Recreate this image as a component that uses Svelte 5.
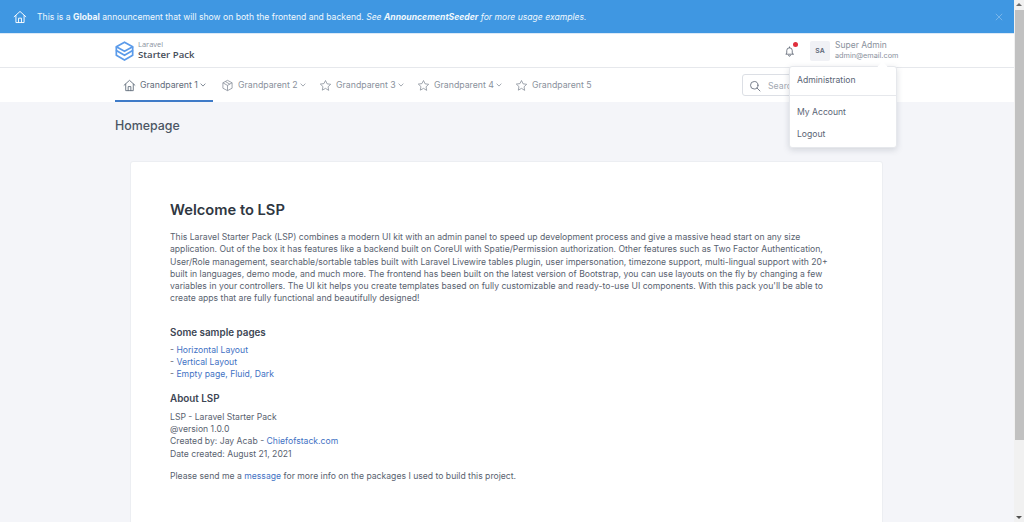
<script>
  const navItems = [
    { label: 'Grandparent 1', icon: 'home', caret: true, active: true },
    { label: 'Grandparent 2', icon: 'cube', caret: true },
    { label: 'Grandparent 3', icon: 'star', caret: true },
    { label: 'Grandparent 4', icon: 'star', caret: true },
    { label: 'Grandparent 5', icon: 'star', caret: false }
  ];
</script>

{#snippet homeIcon(cls)}
  <svg class={cls} viewBox="0 0 24 24" fill="none" stroke="currentColor" stroke-width="1.6" stroke-linecap="round" stroke-linejoin="round">
    <path d="M2 11.500 12 2.500l10 9" />
    <path d="M5 9.500V21.500h14V9.500" />
    <path d="M9.500 21.500v-7.500h5v7.500" />
  </svg>
{/snippet}

<div class="shell">
  <div class="page">
    <div class="banner">
      {@render homeIcon('banner-icon')}
      <p class="banner-text">This is a <strong>Global</strong> announcement that will show on both the frontend and backend. <em>See <strong>AnnouncementSeeder</strong> for more usage examples.</em></p>
      <svg class="close" viewBox="0 0 10 10" fill="none" stroke="currentColor" stroke-width="1.1"><path d="M1 1l8 8M9 1l-8 8" /></svg>
    </div>

    <header class="topbar">
      <div class="container topbar-inner">
        <div class="brand">
          <svg class="logo" viewBox="0 0 20 21" fill="none" stroke="#5b9bea" stroke-width="1.8" stroke-linejoin="round">
            <path d="M10 1.200 18.600 6 10 10.800 1.400 6Z" />
            <path d="M1.400 6v4L10 15l8.600-5V6" />
            <path d="M1.400 10v5L10 20l8.600-5v-5" />
          </svg>
          <div class="brand-text">
            <span class="brand-small">Laravel</span>
            <span class="brand-big">Starter Pack</span>
          </div>
        </div>
        <div class="user-area">
          <div class="bell">
            <svg viewBox="0 0 24 24" fill="none" stroke="#5b6472" stroke-width="1.8" stroke-linecap="round" stroke-linejoin="round">
              <path d="M18 16.500V11a6 6 0 0 0-12 0v5.500L4 19h16z" />
              <path d="M10 21.500a2 2 0 0 0 4 0" />
              <path d="M12 3v2" />
            </svg>
            <span class="dot"></span>
          </div>
          <div class="avatar">SA</div>
          <div class="user-text">
            <span class="user-name">Super Admin</span>
            <span class="user-mail">admin@email.com</span>
          </div>
        </div>
      </div>
    </header>

    <nav class="navbar">
      <div class="container nav-inner">
        <ul class="nav-list">
          {#each navItems as item}
            <li class="nav-item" class:active={item.active}>
              {#if item.icon === 'home'}
                {@render homeIcon('nav-icon')}
              {:else if item.icon === 'cube'}
                <svg class="nav-icon" viewBox="0 0 24 24" fill="none" stroke="currentColor" stroke-width="1.500" stroke-linejoin="round">
                  <path d="M12 2.500 20.500 7v10L12 21.500 3.500 17V7Z" />
                  <path d="M3.500 7 12 11.800 20.500 7M12 11.800v9.700" />
                  <path d="M8 4.700 16.300 9.500" />
                </svg>
              {:else}
                <svg class="nav-icon" viewBox="0 0 24 24" fill="none" stroke="currentColor" stroke-width="1.500" stroke-linejoin="round">
                  <path d="M12 2.800l2.900 6.100 6.700.9-4.900 4.600 1.200 6.600L12 17.300 6.100 20.600l1.200-6.600-4.900-4.600 6.700-.9Z" />
                </svg>
              {/if}
              <span>{item.label}</span>
              {#if item.caret}
                <svg class="caret" viewBox="0 0 10 10" fill="none" stroke="currentColor" stroke-width="1.300" stroke-linecap="round" stroke-linejoin="round"><path d="M1.500 3.200 5 6.800l3.500-3.600" /></svg>
              {/if}
            </li>
          {/each}
        </ul>
        <div class="search">
          <svg viewBox="0 0 24 24" fill="none" stroke="#6b7280" stroke-width="1.800" stroke-linecap="round"><circle cx="10.500" cy="10.500" r="7.500" /><path d="M16 16l6 6" /></svg>
          <span>Search</span>
        </div>
      </div>
    </nav>

    <main class="container content">
      <h1 class="page-title">Homepage</h1>
      <section class="card">
        <h2>Welcome to LSP</h2>
        <p class="intro">This Laravel Starter Pack (LSP) combines a modern UI kit with an admin panel to speed up development process and give a massive head start on any size application. Out of the box it has features like a backend built on CoreUI with Spatie/Permission authorization. Other features such as Two Factor Authentication, User/Role management, searchable/sortable tables built with Laravel Livewire tables plugin, user impersonation, timezone support, multi-lingual support with 20+ built in languages, demo mode, and much more. The frontend has been built on the latest version of Bootstrap, you can use layouts on the fly by changing a few variables in your controllers. The UI kit helps you create templates based on fully customizable and ready-to-use UI components. With this pack you'll be able to create apps that are fully functional and beautifully designed!</p>
        <h3 class="sample-heading">Some sample pages</h3>
        <p class="links">- <a href="#a">Horizontal Layout</a><br />- <a href="#a">Vertical Layout</a><br />- <a href="#a">Empty page, Fluid, Dark</a></p>
        <h3 class="about-heading">About LSP</h3>
        <p class="block">LSP - Laravel Starter Pack<br />@version 1.0.0<br />Created by: Jay Acab - <a href="#a">Chiefofstack.com</a><br />Date created: August 21, 2021</p>
        <p class="closing">Please send me a <a href="#a">message</a> for more info on the packages I used to build this project.</p>
      </section>
    </main>

    <div class="dropdown">
      <div class="menu-item first">Administration</div>
      <div class="divider"></div>
      <div class="menu-item">My Account</div>
      <div class="menu-item">Logout</div>
    </div>
  </div>

  <div class="scrollbar">
    <span class="arrow up"></span>
    <span class="thumb"></span>
    <span class="arrow down"></span>
  </div>
</div>

<style>
  :global(body) { margin: 0; }
  * { box-sizing: border-box; }
  .shell {
    display: flex;
    width: 1024px;
    height: 522px;
    overflow: hidden;
    font-family: Inter, "Noto Sans", sans-serif;
    font-size: 8.640px;
    color: #59626f;
  }
  .page {
    position: relative;
    flex: 1;
    min-width: 0;
    background: #f4f5f9;
    overflow: hidden;
  }
  .container { width: 784px; margin: 0 auto; }

  .banner {
    display: flex;
    align-items: center;
    height: 33px;
    padding: 0 11px 0 13px;
    background: #3f97e2;
    color: #fff;
  }
  :global(.banner-icon) { width: 14px; height: 14px; flex: none; margin-right: 10px; }
  .banner-text { margin: 0; flex: 1; font-size: 8.610px; color: #f0f7fd; }
  .close { width: 8px; height: 8px; color: #7fbaec; }

  .topbar { height: 35px; background: #fff; border-top: 1px solid #dbe9f7; border-bottom: 1px solid #e6e8ec; }
  .topbar-inner { display: flex; align-items: center; justify-content: space-between; height: 33px; }
  .brand { display: flex; align-items: center; gap: 4px; }
  .logo { width: 19px; height: 20px; }
  .brand-text { display: flex; flex-direction: column; line-height: 1; margin-top: -1px; color: #454d59; }
  .brand-small { font-family: "Open Sans", sans-serif; font-size: 7.500px; color: #8a93a0; height: 8px; }
  .brand-big { font-family: "Open Sans", sans-serif; font-size: 9.600px; font-weight: 600; line-height: 11px; }

  .user-area { display: flex; align-items: center; }
  .bell { position: relative; width: 11px; height: 12px; margin-right: 15px; }
  .bell svg { display: block; width: 11px; height: 12px; }
  .dot { position: absolute; top: -3px; left: 9px; width: 5px; height: 5px; border-radius: 50%; background: #e02f3c; }
  .avatar {
    display: flex; align-items: center; justify-content: center;
    width: 20px; height: 20px; margin-right: 5px;
    background: #f0f1f5; border-radius: 2px;
    font-size: 6.800px; font-weight: 600; color: #5b6675;
  }
  .user-text { display: flex; flex-direction: column; width: 64px; }
  .user-name { font-size: 8.500px; line-height: 11px; color: #8a919c; }
  .user-mail { font-size: 7.300px; line-height: 10px; color: #8a919c; }

  .navbar { height: 34px; background: #fff; }
  .nav-inner { display: flex; align-items: stretch; justify-content: space-between; height: 34px; }
  .nav-list { display: flex; margin: 0; padding: 0; list-style: none; }
  .nav-item {
    display: flex; align-items: center;
    width: 98px;
    padding: 2px 0 0 8px;
    color: #8a919c;
    border-bottom: 2px solid transparent;
    font-size: 8.750px;
  }
  .nav-item.active { color: #5f6b7a; border-bottom-color: #3f7bc8; }
  :global(.nav-icon) { width: 13px; height: 13px; margin-right: 4px; flex: none; }
  .caret { width: 6px; height: 6px; margin-left: 2px; }

  .search {
    display: flex; align-items: center; gap: 7px;
    align-self: center;
    width: 155px; height: 22px;
    margin-right: 2px;
    padding: 1px 6px 0;
    border: 1px solid #dcdfe5;
    border-radius: 3px;
    background: #fff;
    color: #a3a9b3;
    font-size: 8.750px;
  }
  .search svg { width: 12px; height: 12px; }

  .page-title { margin: 16px 0 0; font-size: 12.400px; font-weight: 500; line-height: 16px; color: #4b5563; }
  .card {
    width: 753px;
    height: 400px;
    margin: 27px 0 0 15px;
    padding: 38px 39px;
    background: #fff;
    border: 1px solid #eceef2;
    border-radius: 3px;
    line-height: 12.300px;
  }
  .card h2 { margin: 0 0 11px; font-size: 14.700px; line-height: 20px; font-weight: 600; color: #2f3742; }
  .card h3 { margin: 0; font-size: 9.850px; line-height: 14px; font-weight: 600; color: #3d4654; }
  .intro { margin: 0; }
  .sample-heading { margin-top: 20px !important; }
  .about-heading { margin-top: 10px !important; }
  .links { margin: 5px 0 0; }
  .block { margin: 6px 0 0; }
  .closing { margin: 10px 0 0; }
  a { color: #3f72c4; text-decoration: none; }

  .dropdown {
    position: absolute;
    top: 66px;
    left: 789px;
    width: 108px;
    height: 82px;
    padding-top: 7px;
    background: #fff;
    border: 1px solid #e6e8ec;
    border-radius: 3px;
    box-shadow: 0 2px 6px rgba(60, 70, 90, 0.18);
  }
  .dropdown::before {
    content: "";
    position: absolute;
    top: -4px;
    right: 10px;
    width: 7px;
    height: 7px;
    background: #fff;
    transform: rotate(45deg);
  }
  .menu-item { padding: 0 7px; height: 22px; display: flex; align-items: center; font-size: 8.600px; color: #5a6575; }
  .menu-item.first { height: 12px; margin-bottom: 9px; }
  .divider { height: 1px; background: #e6e8ec; margin-bottom: 5px; }

  .scrollbar {
    display: flex; flex-direction: column; align-items: center;
    flex: none; width: 10px; height: 522px;
    padding: 0 1px;
    background: #f1f1f1;
  }
  .thumb { width: 9px; height: 430px; background: #c1c1c1; margin-top: 1px; margin-bottom: auto; }
  .arrow { flex: none; width: 0; height: 0; border-left: 3px solid transparent; border-right: 3px solid transparent; margin: 3px 0; }
  .up { border-bottom: 3px solid #6b6b6b; }
  .down { border-top: 3px solid #505050; }
</style>
